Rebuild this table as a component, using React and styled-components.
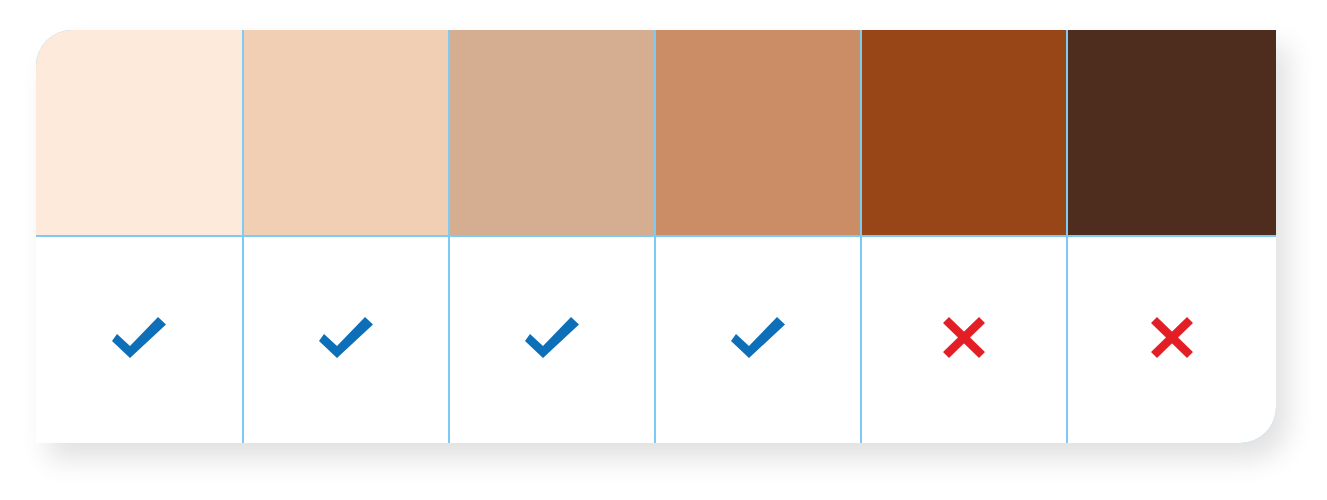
import React from "react";
import styled, { createGlobalStyle } from "styled-components";

const GlobalStyle = createGlobalStyle`
  html, body {
    margin: 0;
    background: #ffffff;
    font-family: "Liberation Sans", Arial, sans-serif;
  }
`;

const shades = [
  { color: "#feeada", ok: true },
  { color: "#f0cfb4", ok: true },
  { color: "#d5ae91", ok: true },
  { color: "#ca8d66", ok: true },
  { color: "#984518", ok: false },
  { color: "#4f2d1e", ok: false },
];

export default function App() {
  return (
    <Page>
      <GlobalStyle />
      <Card>
        {shades.map((s, i) => (
          <Swatch key={"s" + i} $color={s.color} />
        ))}
        {shades.map((s, i) => (
          <Mark key={"m" + i}>{s.ok ? <Check /> : <Cross />}</Mark>
        ))}
      </Card>
    </Page>
  );
}

const Check = () => (
  <svg width="54" height="41" viewBox="0 0 54 41">
    <polygon
      points="5,17 18,29 46,0 54,7.5 18,41 0,24"
      fill="#0d6fb8"
    />
  </svg>
);

const Cross = () => (
  <svg width="44" height="43" viewBox="0 0 44 43">
    <g stroke="#e31e24" strokeWidth="8.5">
      <line x1="4" y1="4" x2="40" y2="39" />
      <line x1="40" y1="4" x2="4" y2="39" />
    </g>
  </svg>
);

const Page = styled.div`
  padding: 30px 0 0 36px;
  height: 500px;
  box-sizing: border-box;
`;

const Card = styled.div`
  width: 1240px;
  height: 413px;
  display: grid;
  grid-template-columns: 206px repeat(4, 204px) 1fr;
  grid-template-rows: 205px 206px;
  gap: 2px;
  background: #7ccbf4;
  border-radius: 36px 0 36px 0;
  overflow: hidden;
  box-shadow: 12px 16px 28px rgba(0, 0, 0, 0.12);
`;

const Swatch = styled.div`
  background: ${(p) => p.$color};
`;

const Mark = styled.div`
  background: #ffffff;
  display: flex;
  align-items: center;
  justify-content: center;
  padding-bottom: 5px;
`;
